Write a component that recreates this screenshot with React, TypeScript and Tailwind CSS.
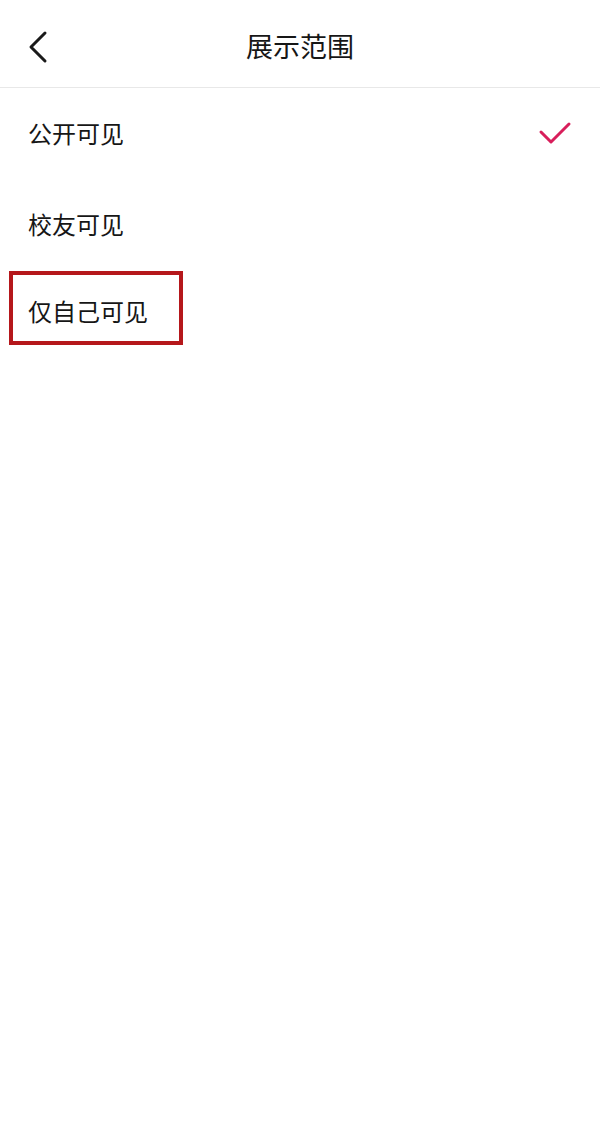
import React from "react";

const font = { fontFamily: '"Noto Sans CJK SC", "Noto Sans", sans-serif' };

export default function App() {
  return (
    <div className="w-[600px] h-[1130px] bg-white text-[#161616]" style={font}>
      <div className="relative h-[88px] flex items-center justify-center border-b border-[#e8e8e8]">
        <svg
          className="absolute left-[26px] top-[30px]"
          width="24"
          height="34"
          viewBox="0 0 24 34"
          fill="none"
          stroke="#1a1a1a"
          strokeWidth="3"
          strokeLinecap="round"
          strokeLinejoin="round"
        >
          <path d="M19 3 L5 17 L19 31" />
        </svg>
        <span className="text-[27px] leading-none pt-[4px]">展示范围</span>
      </div>
      <div className="flex flex-col">
        <div className="h-[90px] flex items-center justify-between pl-[28px] pr-[28px]">
          <span className="text-[24px] leading-none">公开可见</span>
          <svg width="34" height="26" viewBox="0 0 34 26" fill="none" stroke="#d81e5b" strokeWidth="3" strokeLinecap="round" strokeLinejoin="round">
            <path d="M3 12 L13 22 L31 4" />
          </svg>
        </div>
        <div className="h-[92px] flex items-center pl-[28px]">
          <span className="text-[24px] leading-none">校友可见</span>
        </div>
        <div className="pl-[9px] mt-[1px]">
          <div className="w-[174px] h-[74px] border-[4px] border-[#b5171b] flex items-center pl-[15px] pt-[6px]">
            <span className="text-[24px] leading-none">仅自己可见</span>
          </div>
        </div>
      </div>
    </div>
  );
}
